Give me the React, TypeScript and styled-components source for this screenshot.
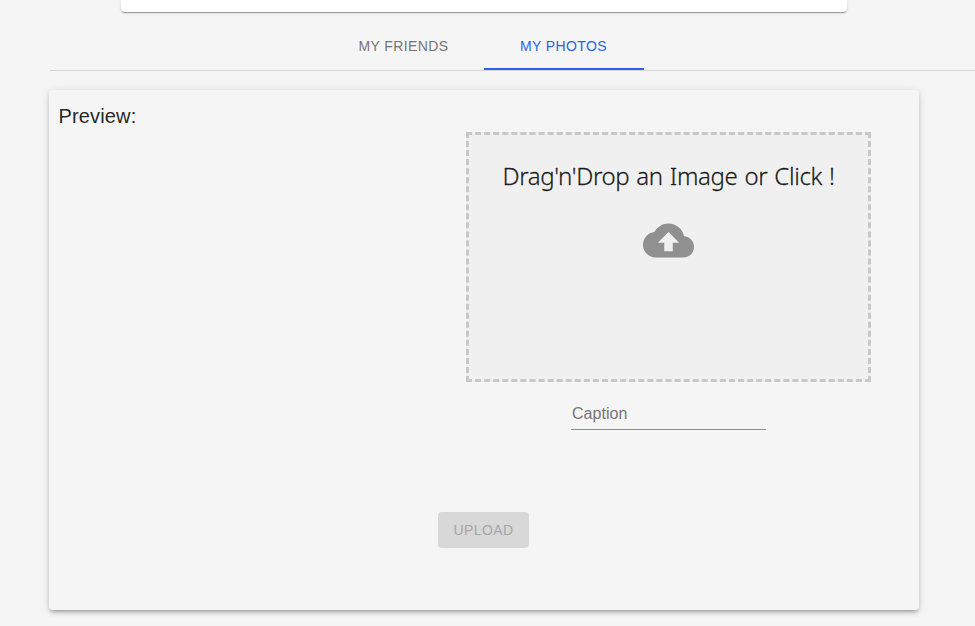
import React from "react";
import styled, { createGlobalStyle } from "styled-components";

const Global = createGlobalStyle`
  *{box-sizing:border-box}
  html,body{margin:0;background:#f5f5f5;overflow:hidden}
  body{font-family:"Liberation Sans",Arial,sans-serif;color:rgba(0,0,0,.87)}
`;
const shadow = "0 2px 1px -1px rgba(0,0,0,.2),0 1px 1px 0 rgba(0,0,0,.14),0 1px 3px 0 rgba(0,0,0,.12)";
const Page = styled.div`width:975px;height:626px;overflow:hidden;background:#f5f5f5;display:flex;flex-direction:column`;
const TopCard = styled.div`height:12px;flex:none;width:726px;margin-left:121px;background:#fff;border-radius:0 0 4px 4px;box-shadow:${shadow}`;
const Tabs = styled.nav`height:49px;flex:none;margin:10px 0 0 50px;padding-left:273px;display:flex;border-bottom:1px solid #d5d5d5`;
const Tab = styled.button<{ $active?: boolean }>`
  width:${p => p.$active ? 160 : 161}px;height:48px;padding:${p => p.$active ? "0 1px 1px 0" : "0 0 1px"};border:0;background:none;
  font:14px "Liberation Sans",Arial,sans-serif;letter-spacing:.4px;
  color:${p => p.$active ? "#2a64e8" : "#757575"};
  box-shadow:${p => p.$active ? "inset 0 -2px #2a64e8" : "none"};
`;
const Panel = styled.main`
  width:870px;height:520px;flex:none;margin:19px 0 0 49px;padding:12px 48px 0 9.5px;border-radius:4px;
  background:#f5f5f5;display:flex;flex-direction:column;
  box-shadow:0 3px 3px -2px rgba(0,0,0,.2),0 3px 4px 0 rgba(0,0,0,.14),0 1px 8px 0 rgba(0,0,0,.12);
`;
const Columns = styled.div`display:flex;justify-content:space-between;height:410px`;
const Preview = styled.h2`margin:0;font:400 20px/28px "Liberation Sans",Arial,sans-serif;letter-spacing:.15px`;
const Form = styled.div`width:405px;padding-top:30px;display:flex;flex-direction:column;align-items:center`;
const DropZone = styled.div`
  width:405px;height:250px;border:3px dashed #c8c8c8;background:#f0f0f0;
  display:flex;flex-direction:column;align-items:center;padding-top:25px;
`;
const Title = styled.p`margin:0;font:300 24px/32px "Noto Sans",sans-serif;letter-spacing:-.35px;word-spacing:1.1px;-webkit-text-stroke:.3px currentColor;white-space:nowrap`;
const Cloud = styled.svg`width:51px;height:51px;margin-top:23px;fill:#909090`;
const Caption = styled.input`
  width:195px;height:32px;margin-top:16px;padding:0 1px;border:0;border-bottom:1px solid #8e8e8e;border-radius:0;background:none;
  font:16px "Liberation Sans",Arial,sans-serif;letter-spacing:.05px;
  &::placeholder{color:#757575;opacity:1}
`;
const Upload = styled.button`
  width:91px;height:36px;margin-left:379.5px;border:0;border-radius:4px;background:#d8d8d8;color:#a6a6a6;
  font:14px "Liberation Sans",Arial,sans-serif;letter-spacing:.4px;
`;

export default function App() {
  return (
    <Page>
      <Global />
      <TopCard />
      <Tabs><Tab>MY FRIENDS</Tab><Tab $active>MY PHOTOS</Tab></Tabs>
      <Panel>
        <Columns>
          <Preview>Preview:</Preview>
          <Form>
            <DropZone>
              <Title>Drag'n'Drop an Image or Click !</Title>
              <Cloud viewBox="0 0 24 24"><path d="M19.35 10.04C18.67 6.59 15.64 4 12 4 9.11 4 6.6 5.64 5.35 8.04 2.34 8.36 0 10.91 0 14c0 3.31 2.69 6 6 6h13c2.76 0 5-2.24 5-5 0-2.64-2.05-4.78-4.65-4.96zM14 13v4h-4v-4H7l5-5 5 5h-3z" /></Cloud>
            </DropZone>
            <Caption placeholder="Caption" />
          </Form>
        </Columns>
        <Upload disabled>UPLOAD</Upload>
      </Panel>
    </Page>
  );
}
